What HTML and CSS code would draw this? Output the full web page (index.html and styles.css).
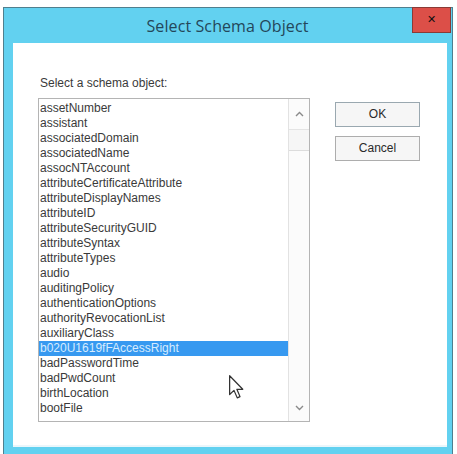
FILE: index.html
```html
<!DOCTYPE html>
<html>
<head>
<meta charset="utf-8">
<link rel="stylesheet" href="styles.css">
</head>
<body>
<div class="window">
  <div class="titlebar">
    <div class="spacer"></div>
    <div class="title">Select Schema Object</div>
    <div class="close-wrap"><div class="close">&#x2715;</div></div>
  </div>
  <div class="client">
    <div class="left">
      <div class="label">Select a schema object:</div>
      <div class="listbox">
        <div class="items">
          <div class="item">assetNumber</div>
          <div class="item">assistant</div>
          <div class="item">associatedDomain</div>
          <div class="item">associatedName</div>
          <div class="item">assocNTAccount</div>
          <div class="item">attributeCertificateAttribute</div>
          <div class="item">attributeDisplayNames</div>
          <div class="item">attributeID</div>
          <div class="item">attributeSecurityGUID</div>
          <div class="item">attributeSyntax</div>
          <div class="item">attributeTypes</div>
          <div class="item">audio</div>
          <div class="item">auditingPolicy</div>
          <div class="item">authenticationOptions</div>
          <div class="item">authorityRevocationList</div>
          <div class="item">auxiliaryClass</div>
          <div class="item selected">b020U1619fFAccessRight</div>
          <div class="item">badPasswordTime</div>
          <div class="item">badPwdCount</div>
          <div class="item">birthLocation</div>
          <div class="item">bootFile</div>
        </div>
        <div class="scrollbar">
          <div class="arrow up">
            <svg width="9" height="6" viewBox="0 0 9 6"><path d="M1 5 L4.5 1.5 L8 5" fill="none" stroke="#8a8a8a" stroke-width="1.4"/></svg>
          </div>
          <div class="thumb"></div>
          <div class="track"></div>
          <div class="arrow down">
            <svg width="9" height="6" viewBox="0 0 9 6"><path d="M1 1 L4.5 4.5 L8 1" fill="none" stroke="#8a8a8a" stroke-width="1.4"/></svg>
          </div>
        </div>
      </div>
    </div>
    <div class="buttons">
      <div class="btn default">OK</div>
      <div class="btn">Cancel</div>
    </div>
  </div>
</div>
<svg class="cursor" width="15" height="24" viewBox="0 0 12 19">
  <path d="M0.5 0.5 L0.5 15.5 L4 12.2 L6.6 18.2 L8.8 17.2 L6.3 11.3 L11 11.3 Z" fill="#ffffff" stroke="#333" stroke-width="1" stroke-linejoin="round"/>
</svg>
</body>
</html>
```

FILE: styles.css
```css
html, body {
  margin: 0;
  padding: 0;
  background: #ffffff;
  width: 457px;
  height: 454px;
  overflow: hidden;
  position: relative;
}

.window {
  margin: 7px 0 0 3px;
  width: 448px;
  height: 460px;
  border: 1px solid #4f7f8e;
  border-bottom: none;
  background: linear-gradient(#62d1f0, #62d1f0);
  display: flex;
  flex-direction: column;
}

.titlebar {
  flex: 0 0 35px;
  height: 35px;
  background: linear-gradient(#62d1f0, #62d1f0);
  display: flex;
  align-items: flex-start;
}

.spacer {
  flex: 1;
}

.title {
  flex: 0 0 auto;
  font-family: "Open Sans", "Liberation Sans", sans-serif;
  font-size: 16px;
  color: #24475a;
  line-height: 36px;
  letter-spacing: 0.1px;
}

.close-wrap {
  flex: 1;
  display: flex;
  justify-content: flex-end;
  padding-right: 1px;
}

.close {
  margin-top: -1px;
  width: 37px;
  height: 24px;
  background: linear-gradient(#dc4f48, #dc4f48);
  border: 1px solid #8a3a36;
  color: #111111;
  font-family: "DejaVu Sans", sans-serif;
  font-weight: bold;
  font-size: 11px;
  line-height: 24px;
  text-align: center;
}

.client {
  margin: 0 5px 0 9px;
  background: #ffffff;
  height: 404px;
  border-bottom: 2px solid #eaf6fb;
  display: flex;
  padding: 33px 0 0 25px;
  box-sizing: border-box;
  font-family: "Liberation Sans", Arial, sans-serif;
  font-size: 12px;
  color: #3a3a3a;
}

.left {
  display: flex;
  flex-direction: column;
}

.label {
  line-height: 15px;
  padding-left: 2px;
  margin-bottom: 7px;
  color: #3a3a3a;
}

.listbox {
  width: 270px;
  height: 322px;
  border: 1px solid #b4b4b4;
  display: flex;
  overflow: hidden;
}

.items {
  flex: 1;
  padding-top: 2px;
  overflow: hidden;
}

.item {
  height: 15px;
  line-height: 15px;
  padding-left: 1px;
  white-space: nowrap;
  color: #3a3a3a;
}

.item.selected {
  background: #3799f0;
  color: #d6ecff;
}

.scrollbar {
  width: 20px;
  border-left: 1px solid #e2e2e2;
  background: #fbfbfb;
  display: flex;
  flex-direction: column;
}

.arrow {
  height: 24px;
  display: flex;
  align-items: center;
  justify-content: center;
}

.arrow.up {
  height: 30px;
  border-bottom: 1px solid #e4e4e4;
}

.arrow.down {
  height: 26px;
  padding-top: 2px;
}

.thumb {
  height: 20px;
  border-bottom: 1px solid #dcdcdc;
  background: #f6f6f6;
}

.track {
  flex: 1;
}

.buttons {
  display: flex;
  flex-direction: column;
  gap: 9px;
  margin-left: 25px;
  margin-top: 26px;
}

.btn {
  width: 83px;
  height: 23px;
  border: 1px solid #adadad;
  background: #f6f6f6;
  text-align: center;
  line-height: 23px;
  color: #2a2a2a;
}

.btn.default {
  border-color: #9aa8b0;
}

.cursor {
  position: absolute;
  left: 229px;
  top: 375px;
}
```
